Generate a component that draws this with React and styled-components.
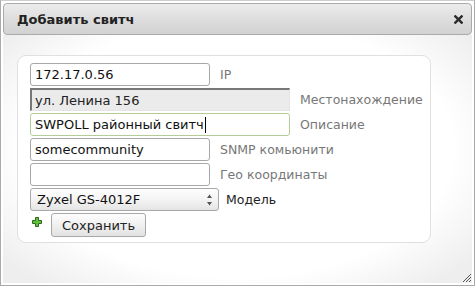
import React from 'react';
import styled, { createGlobalStyle } from 'styled-components';

const GlobalStyle = createGlobalStyle`
	html, body {
		margin: 0;
		padding: 0;
		background: #fff;
	}
	body {
		font-family: 'DejaVu Sans', Verdana, sans-serif;
		font-size: 13px;
	}
`;

export default function App() {
	return (
		<>
			<GlobalStyle />
			<Dialog>
				<TitleBar>
					<Title>Добавить свитч</Title>
					<CloseIcon viewBox="0 0 10 10">
						<path d="M1.5 1.5 L8.5 8.5 M8.5 1.5 L1.5 8.5" stroke="#2b2b2b" strokeWidth="2.6" strokeLinecap="square" />
					</CloseIcon>
				</TitleBar>
				<Content>
					<Panel>
						<Row>
							<Field defaultValue="172.17.0.56" readOnly />
							<Label>IP</Label>
						</Row>
						<Row>
							<Field $wide $disabled defaultValue="ул. Ленина 156" readOnly />
							<Label>Местонахождение</Label>
						</Row>
						<Row>
							<FocusField>
								SWPOLL районный свитч<Caret />
							</FocusField>
							<Label>Описание</Label>
						</Row>
						<Row>
							<Field defaultValue="somecommunity" readOnly />
							<Label>SNMP комьюнити</Label>
						</Row>
						<Row>
							<Field defaultValue="" readOnly />
							<Label>Гео координаты</Label>
						</Row>
						<Row>
							<SelectBox>
								<span>Zyxel GS-4012F</span>
								<Arrows viewBox="0 0 7 14">
									<path d="M3.5 1.5 L6 5 L1 5 Z" fill="#555" />
									<path d="M1 9 L6 9 L3.5 12.5 Z" fill="#555" />
								</Arrows>
							</SelectBox>
							<Label $dark>Модель</Label>
						</Row>
						<Actions>
							<PlusIcon viewBox="0 0 10 10">
								<path
									d="M3.5 0.5 H6.5 V3.5 H9.5 V6.5 H6.5 V9.5 H3.5 V6.5 H0.5 V3.5 H3.5 Z"
									fill="#5fc23a"
									stroke="#2d6b1c"
									strokeWidth="1"
								/>
							</PlusIcon>
							<Button>Сохранить</Button>
						</Actions>
					</Panel>
				</Content>
				<Grip viewBox="0 0 12 12">
					<path d="M11 3 L3 11 M11 6 L6 11 M11 9 L9 11" stroke="#555" strokeWidth="1" />
				</Grip>
			</Dialog>
		</>
	);
}

const Dialog = styled.div`
	position: relative;
	box-sizing: border-box;
	width: 475px;
	height: 286px;
	border: 1px solid #aaa;
	border-top-color: #ccc;
	padding: 2px;
	display: flex;
	flex-direction: column;
	background: #fff;
`;

const TitleBar = styled.div`
	box-sizing: border-box;
	height: 32px;
	border: 1px solid #aaa;
	border-radius: 4px;
	background: linear-gradient(to bottom, #ececec 0%, #dcdcdc 55%, #d2d2d2 100%);
	display: flex;
	align-items: center;
	justify-content: space-between;
	padding: 0 8px 0 13px;
`;

const Title = styled.span`
	font-weight: bold;
	font-size: 13px;
	color: #222;
`;

const CloseIcon = styled.svg`
	width: 9px;
	height: 9px;
	margin-top: 1px;
`;

const Content = styled.div`
	flex: 1;
	padding: 20px 40px 40px 14px;
	background:
		radial-gradient(ellipse 64% 72% at 50% 46%, #fff 72%, rgba(255, 255, 255, 0) 100%),
		#eeeeee;
`;

const Panel = styled.div`
	box-sizing: border-box;
	width: 414px;
	height: 188px;
	border: 1px solid #e0e0e0;
	border-radius: 9px;
	background: #fff;
	padding: 7px 12px;
	display: flex;
	flex-direction: column;
	gap: 2px;
`;

const Row = styled.div`
	display: flex;
	align-items: center;
	height: 23px;
`;

const Field = styled.input`
	box-sizing: border-box;
	flex-shrink: 0;
	width: ${(p) => (p.$wide ? '260px' : '180px')};
	height: 23px;
	margin: 0;
	padding: 0 4px;
	font-family: 'DejaVu Sans', Verdana, sans-serif;
	font-size: 13px;
	color: #111;
	outline: none;
	border: 1px solid #a8a8a8;
	border-radius: 3px;
	background: #fff;
	${(p) =>
		p.$disabled &&
		`
		background: #ebebeb;
		border-radius: 0;
		border-top: 2px solid #777;
		border-left: 2px solid #777;
		border-right: 1px solid #e4e4e4;
		border-bottom: 1px solid #e4e4e4;
		padding-left: 3px;
		color: #222;
	`}
`;

const FocusField = styled.div`
	box-sizing: border-box;
	flex-shrink: 0;
	width: 260px;
	height: 23px;
	padding: 0 4px;
	display: flex;
	align-items: center;
	border: 1px solid #b3cc98;
	border-radius: 3px;
	color: #111;
	white-space: nowrap;
`;

const Caret = styled.span`
	display: inline-block;
	width: 1px;
	height: 16px;
	margin-left: 1px;
	background: #000;
`;

const Label = styled.span`
	flex-shrink: 0;
	margin-left: ${(p) => (p.$dark ? '7px' : '10px')};
	font-size: 12.5px;
	color: ${(p) => (p.$dark ? '#222' : '#777')};
	white-space: nowrap;
`;

const SelectBox = styled.div`
	box-sizing: border-box;
	flex-shrink: 0;
	width: 189px;
	height: 23px;
	padding: 0 5px 0 6px;
	display: flex;
	align-items: center;
	justify-content: space-between;
	border: 1px solid #a8a8a8;
	border-radius: 3px;
	background: linear-gradient(to bottom, #fefefe 0%, #f4f4f4 50%, #e4e4e4 100%);
	color: #111;
`;

const Arrows = styled.svg`
	width: 7px;
	height: 14px;
`;

const Actions = styled.div`
	display: flex;
	align-items: center;
	gap: 9px;
	padding-left: 2px;
	height: 24px;
`;

const PlusIcon = styled.svg`
	width: 10px;
	height: 10px;
	margin-top: -6px;
`;

const Button = styled.button`
	box-sizing: border-box;
	width: 95px;
	height: 24px;
	margin: 0;
	padding: 0;
	font-family: 'DejaVu Sans', Verdana, sans-serif;
	font-size: 13px;
	color: #222;
	border: 1px solid #a8a8a8;
	border-radius: 3px;
	background: linear-gradient(to bottom, #fdfdfd 0%, #f0f0f0 50%, #e2e2e2 100%);
`;

const Grip = styled.svg`
	position: absolute;
	right: 2px;
	bottom: 2px;
	width: 12px;
	height: 12px;
`;
